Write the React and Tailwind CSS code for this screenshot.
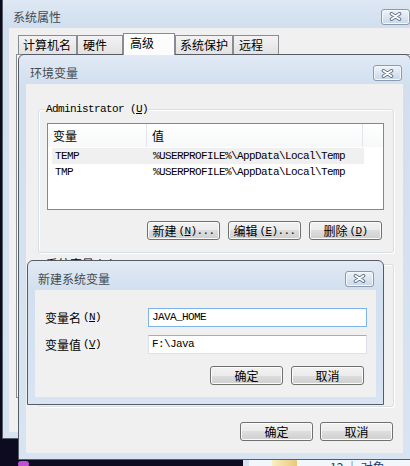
const cjk = "font-['Noto_Sans_CJK_SC',sans-serif]";
const mono = "font-['Liberation_Mono','Noto_Sans_CJK_SC',monospace] text-[11px] tracking-[-0.6px]";

const frameClass =
  "flex flex-col border border-[#565c64] bg-[linear-gradient(#e1eaf5,#d1dfef_30px,#d8e4f2)]";

function CloseButton() {
  return (
    <div className="flex h-[16px] w-[29px] shrink-0 items-center justify-center rounded-[3px] border border-[#8b9aae] bg-[linear-gradient(#eef3f9,#cad8e9)] shadow-[inset_0_0_0_1px_#f4f8fc]">
      <svg width="13" height="9" viewBox="0 0 13 9">
        <path d="M2.5 1.8 L10.5 7.2 M10.5 1.8 L2.5 7.2" stroke="#66768a" strokeWidth="3.6" strokeLinecap="round" />
        <path d="M2.5 1.8 L10.5 7.2 M10.5 1.8 L2.5 7.2" stroke="#ffffff" strokeWidth="1.7" strokeLinecap="round" />
      </svg>
    </div>
  );
}

function WinButton({ children }) {
  return (
    <div className="flex h-[19px] w-[73px] items-center justify-center rounded-[3px] border border-[#707070] bg-[linear-gradient(#f2f2f2_0%,#ebebeb_50%,#dddddd_50%,#cfcfcf_100%)] text-[12px] leading-[14px] text-black shadow-[inset_0_0_0_1px_#fbfbfb]">
      {children}
    </div>
  );
}

function Key({ label, letter, dots }) {
  return (
    <span className="flex items-center">
      <span className={cjk}>{label}</span>
      <span className={`${mono} ml-[2px]`}>
        (<u className="underline-offset-1">{letter}</u>){dots ? "..." : ""}
      </span>
    </span>
  );
}

function Tab({ label, width, selected, pad }) {
  return (
    <div
      className={`${cjk} border border-b-0 border-[#898c95] text-[12px] leading-[16px] text-black ${
        selected
          ? "relative z-10 -mb-px h-[22px] bg-[#fcfcfc] pt-[1px]"
          : "h-[19px] bg-[linear-gradient(#f3f3f3,#e2e2e2)] pt-[1px]"
      }`}
      style={{ width, paddingLeft: pad }}
    >
      {label}
    </div>
  );
}

function GroupBox({ label, letter, className, children }) {
  return (
    <div
      className={`relative rounded-[3px] border border-[#d5dfe5] shadow-[inset_1px_1px_0_#ffffff,1px_1px_0_#ffffff] ${className}`}
    >
      <span className="absolute left-[6px] top-[-8px] flex bg-[#f0f0f0] px-[1px] leading-[14px] text-[12px] text-black">
        {label}
        <span className={mono}>
          (<u>{letter}</u>)
        </span>
      </span>
      {children}
    </div>
  );
}

const rows = [
  { name: "TEMP", value: "%USERPROFILE%\\AppData\\Local\\Temp", active: true },
  { name: "TMP", value: "%USERPROFILE%\\AppData\\Local\\Temp" },
];

export default function App() {
  return (
    <div className={`${cjk} relative h-[466px] w-[410px] overflow-hidden bg-[#0c0b20]`}>
      {/* desktop strip at the bottom */}
      <div className="absolute left-[18px] top-[461px] h-[6px] w-[11px] rounded-full bg-[#c04fd8]" />
      <div className="absolute left-[243px] top-[460px] flex h-[6px] w-[167px] overflow-hidden bg-[#f3f6fa]">
        <div className="h-full w-[6px] bg-[#d7e3f0]" />
        <div className="ml-[23px] h-full w-[25px] bg-[linear-gradient(90deg,#fbefc4,#e9c978)]" />
        <span className="ml-[33px] mt-[1px] text-[12px] leading-[12px] text-[#1d3f70]">12 │ 对象</span>
      </div>

      {/* 系统属性 */}
      <div className={`${frameClass} absolute left-[2px] top-[-6px] h-[445px] w-[440px]`}>
        <div className="flex h-[33px] shrink-0 items-center justify-between pl-[10px] pr-[31px] pt-[10px]">
          <span className="text-[12px] leading-[14px] text-[#444a52]">系统属性</span>
          <CloseButton />
        </div>
        <div className="mx-[6px] mb-[6px] flex-1 overflow-hidden bg-[#f0f0f0] pl-[7px] pt-[5px]">
          <div className="flex h-[21px] items-end pl-[2px]">
            <Tab label="计算机名" width={59} pad={4} />
            <Tab label="硬件" width={46} pad={5} />
            <Tab label="高级" width={52} pad={6} selected />
            <Tab label="系统保护" width={58} pad={4} />
            <Tab label="远程" width={46} pad={5} />
          </div>
          <div className="h-[344px] w-[440px] border border-[#898c95] bg-[#fcfcfc]" />
        </div>
      </div>

      {/* 环境变量 */}
      <div className={`${frameClass} absolute left-[18px] top-[54px] h-[406px] w-[393px] rounded-t-[6px]`}>
        <div className="flex h-[29px] shrink-0 items-center justify-between pl-[11px] pr-[8px] pt-[7px]">
          <span className="text-[12px] leading-[14px] text-[#444a52]">环境变量</span>
          <CloseButton />
        </div>
        <div className="mx-[7px] mb-[6px] flex flex-1 flex-col bg-[#f0f0f0]">
          <GroupBox
            label={<span className={`${mono} mr-[6px]`}>Administrator</span>}
            letter="U"
            className="ml-[12px] mr-[9px] mt-[25px] h-[144px] pl-[8px] pt-[13px]"
          >
            <div className="flex h-[87px] w-[337px] flex-col border border-[#828790] bg-white">
              <div className="flex h-[23px] shrink-0 bg-[linear-gradient(#ffffff,#f7f8fa)] text-[12px] leading-[14px]">
                <div className="flex w-[99px] items-center border-r border-[#e3e5e8] pl-[5px]">变量</div>
                <div className="flex w-[216px] items-center border-r border-[#e3e5e8] pl-[5px]">值</div>
                <div className="flex-1" />
              </div>
              <div className="mt-[1px]">
                {rows.map((row) => (
                  <div
                    key={row.name}
                    className={`${mono} ml-[4px] flex h-[16px] w-[312px] items-center pl-[3px] leading-[16px] text-black ${
                      row.active ? "bg-[#f0f0f0]" : ""
                    }`}
                  >
                    <span className="w-[98px]">{row.name}</span>
                    <span>{row.value}</span>
                  </div>
                ))}
              </div>
            </div>
            <div className="mt-[11px] flex justify-end gap-[8px] pr-[11px]">
              <WinButton>
                <Key label="新建" letter="N" dots />
              </WinButton>
              <WinButton>
                <Key label="编辑" letter="E" dots />
              </WinButton>
              <WinButton>
                <Key label="删除" letter="D" />
              </WinButton>
            </div>
          </GroupBox>

          <GroupBox
            label={<span className="mr-[2px]">系统变量</span>}
            letter="S"
            className="ml-[12px] mr-[9px] mt-[11px] h-[143px]"
          />

          <div className="mt-[15px] flex justify-end gap-[7px] pr-[10px]">
            <WinButton>确定</WinButton>
            <WinButton>取消</WinButton>
          </div>
        </div>
      </div>

      {/* 新建系统变量 */}
      <div className={`${frameClass} absolute left-[27px] top-[260px] h-[145px] w-[357px] rounded-t-[6px]`}>
        <div className="flex h-[29px] shrink-0 items-center justify-between pl-[10px] pr-[9px] pt-[6px]">
          <span className="text-[12px] leading-[14px] text-[#444a52]">新建系统变量</span>
          <CloseButton />
        </div>
        <div className="mx-[7px] mb-[7px] flex-1 bg-[#f0f0f0] pl-[10px] pr-[9px] pt-[18px] text-[12px] text-black">
          <div className="flex h-[19px] items-center">
            <div className="w-[103px]">
              <Key label="变量名" letter="N" />
            </div>
            <div className={`${mono} flex h-[19px] flex-1 items-center border border-[#7eb4ea] bg-white pl-[3px]`}>
              JAVA_HOME
            </div>
          </div>
          <div className="mt-[8px] flex h-[19px] items-center">
            <div className="w-[103px]">
              <Key label="变量值" letter="V" />
            </div>
            <div className={`${mono} flex h-[19px] flex-1 items-center border border-[#dde1e7] border-t-[#abadb3] bg-white pl-[3px]`}>
              F:\Java
            </div>
          </div>
          <div className="mt-[12px] flex justify-end gap-[8px] pr-[3px]">
            <WinButton>确定</WinButton>
            <WinButton>取消</WinButton>
          </div>
        </div>
      </div>
    </div>
  );
}
